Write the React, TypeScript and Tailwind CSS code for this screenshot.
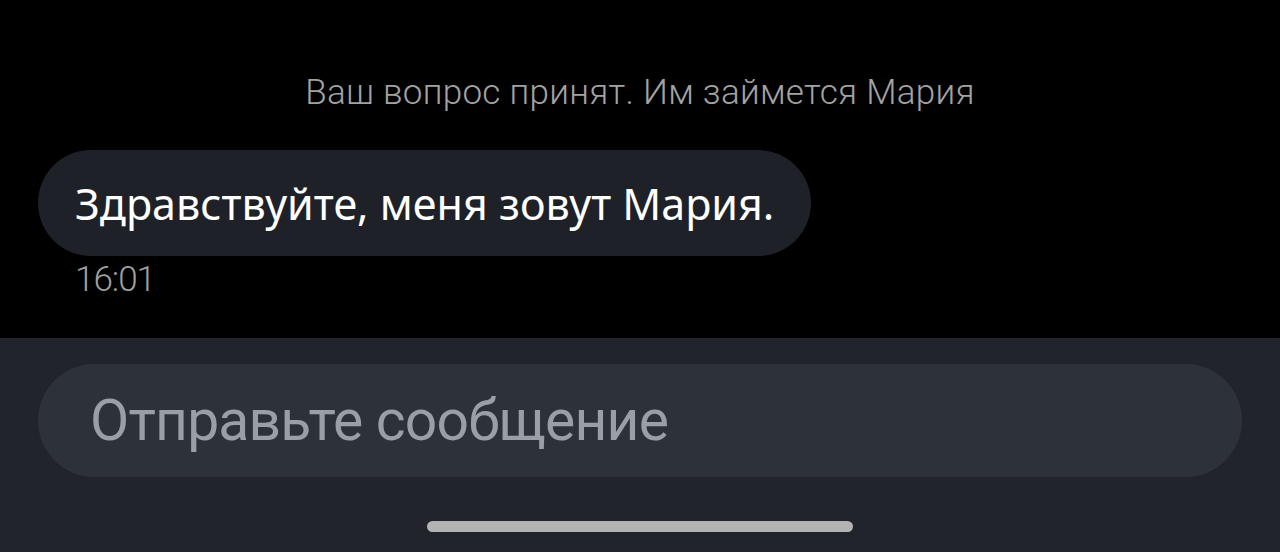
import React from 'react';

const App = () => {
  return (
    <div className="w-full h-[552px] bg-black flex flex-col overflow-hidden">
      {/* Chat area */}
      <section className="h-[338px] flex flex-col pt-[74px] px-[38px]">
        <p
          className="text-center text-[35px] leading-[38px] text-[#a3a3a3] tracking-[0.3px]"
          style={{ fontFamily: '"Roboto", "Noto Sans", sans-serif', fontWeight: 300 }}
        >
          Ваш вопрос принят. Им займется Мария
        </p>
        <div className="mt-[38px] self-start h-[106px] rounded-full bg-[#1e2128] flex items-center pl-[37px] pr-[37px]">
          <span
            className="text-white text-[43px] leading-none"
            style={{ fontFamily: '"Noto Sans", sans-serif' }}
          >
            Здравствуйте, меня зовут Мария.
          </span>
        </div>
        <span
          className="mt-[6px] ml-[37px] text-[#a0a0a0] text-[35px] leading-[36px] tracking-[-1px]"
          style={{ fontFamily: '"Roboto", sans-serif', fontWeight: 300 }}
        >
          16:01
        </span>
      </section>

      {/* Input area */}
      <section className="flex-1 bg-[#21242b] flex flex-col px-[38px] pt-[26px]">
        <div className="h-[113px] rounded-full bg-[#2d313a] flex items-center pl-[52px]">
          <span
            className="text-[#9a9ea5] text-[57px] leading-none tracking-[-0.8px]"
            style={{ fontFamily: '"Roboto", sans-serif' }}
          >
            Отправьте сообщение
          </span>
        </div>
        <div className="mt-[44px] self-center w-[426px] h-[11px] rounded-full bg-[#b3b3b3]" />
      </section>
    </div>
  );
};

export default App;
